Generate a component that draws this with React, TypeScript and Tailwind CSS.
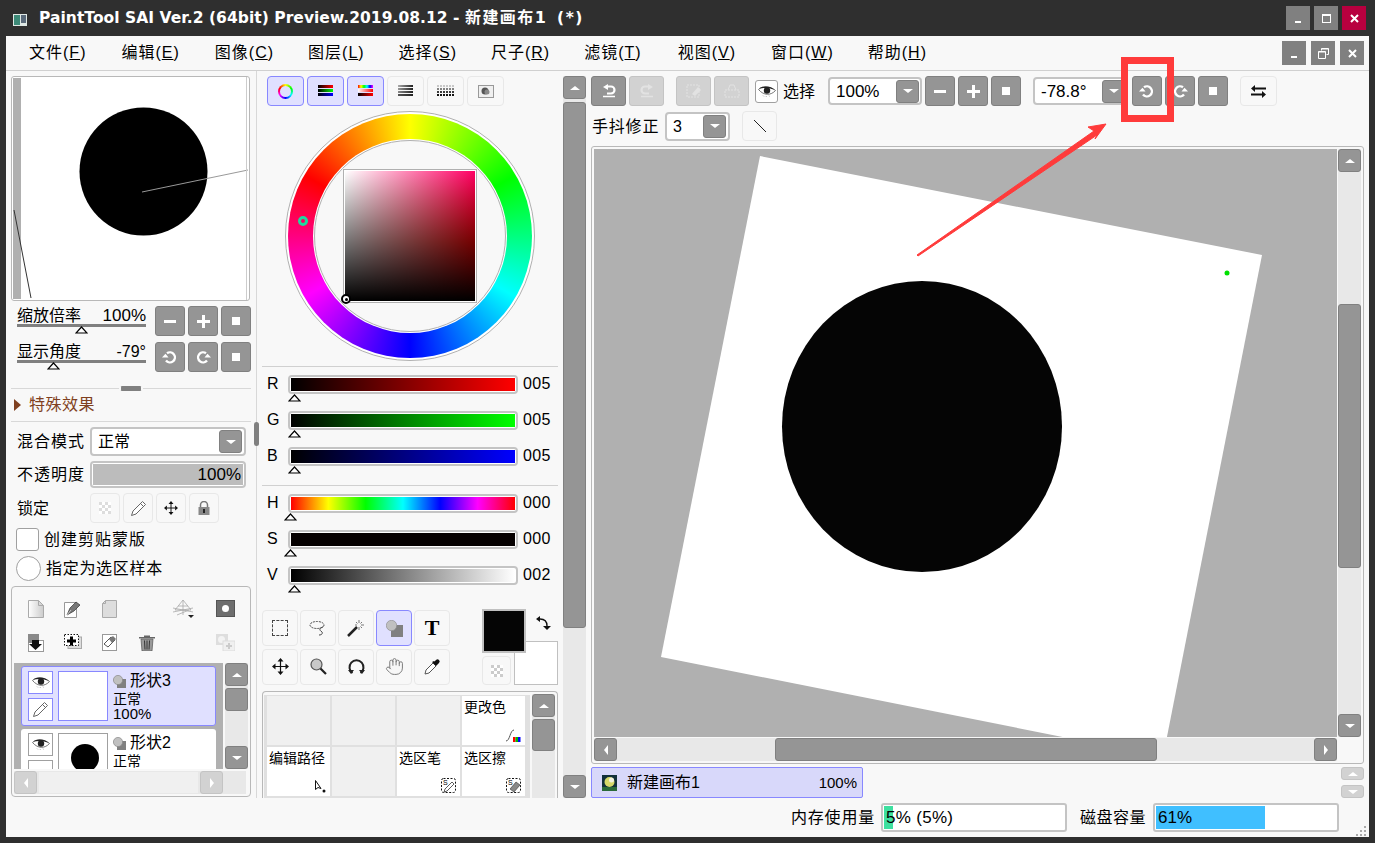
import React from "react";
import { Hand } from "lucide-react";

type P = { className?: string; children?: React.ReactNode };

const Gbtn = ({ className = "w-[30px] h-[30px]", children }: P) => (
  <div className={`flex shrink-0 items-center justify-center rounded-[3px] border border-[#808080] bg-[#959595] ${className}`}>{children}</div>
);
const Ghost = ({ className = "w-[30px] h-[30px]", children }: P) => (
  <div className={`flex shrink-0 items-center justify-center rounded-[4px] border border-[#e8e8e8] bg-[#f8f8f8] ${className}`}>{children}</div>
);
const Active = ({ className = "w-[37px] h-[30px]", children }: P) => (
  <div className={`flex shrink-0 items-center justify-center rounded-[4px] border border-[#8888ff] bg-[#e0e0ff] ${className}`}>{children}</div>
);
const Disabled = ({ className = "w-[35px] h-[30px]", children }: P) => (
  <div className={`flex shrink-0 items-center justify-center rounded-[3px] border border-[#c4c4c4] bg-[#d2d2d2] ${className}`}>{children}</div>
);

const Minus = () => <div className="h-[3px] w-[12px] bg-white" />;
const Plus = () => (
  <svg width="13" height="13" viewBox="0 0 13 13"><path d="M5 0h3v5h5v3H8v5H5V8H0V5h5z" fill="#fff" /></svg>
);
const Sq = () => <div className="h-[8px] w-[8px] bg-white" />;
const Ccw = ({ color = "#fff" }: { color?: string }) => (
  <svg width="16" height="15" viewBox="0 0 16 15" fill="none">
    <path d="M5 3.300A5 5 0 1 1 4 10.500" stroke={color} strokeWidth="2.400" />
    <path d="M0 7.500h6.500L3.500 3.800z" fill={color} />
  </svg>
);
const Cw = ({ color = "#fff" }: { color?: string }) => (
  <svg width="16" height="15" viewBox="0 0 16 15" fill="none">
    <path d="M11 3.300A5 5 0 1 0 12 10.500" stroke={color} strokeWidth="2.400" />
    <path d="M16 7.500H9.500l3-3.700z" fill={color} />
  </svg>
);
const DownTri = () => <div className="h-0 w-0 border-x-[5px] border-t-[4px] border-x-transparent border-t-white" />;
const Drop = ({ className }: P) => <Gbtn className={className}><DownTri /></Gbtn>;
const UpTri = () => <div className="h-0 w-0 border-x-[5px] border-b-[4px] border-x-transparent border-b-white" />;
const LeftTri = () => <div className="h-0 w-0 border-y-[5px] border-r-[4px] border-y-transparent border-r-white" />;
const RightTri = () => <div className="h-0 w-0 border-y-[5px] border-l-[4px] border-y-transparent border-l-white" />;
const Thumb = () => (
  <svg width="13" height="8" viewBox="0 0 13 8" className="block"><path d="M6.500 1 12 7H1z" fill="#fff" stroke="#000" strokeWidth="1.200" /></svg>
);
const Eye = () => (
  <svg width="18" height="11" viewBox="0 0 18 11">
    <path d="M0.500 3.500C4 0 12 -0.500 17.500 4.500 13 9.500 6 10 0.500 3.500z" fill="#fff" stroke="#555" strokeWidth=".8" />
    <circle cx="9" cy="4.500" r="3.200" fill="#222" />
    <path d="M1 2.500C5-0.500 12-0.500 17 4 12 1.500 6 1.500 1 2.500z" fill="#222" />
    <path d="M5 9.500l1 1M8 10l.5 1M11 9.500l.5 1" stroke="#999" strokeWidth=".7" />
  </svg>
);
const Pencil = ({ c = "#555" }: { c?: string }) => (
  <svg width="17" height="17" viewBox="0 0 17 17" fill="#fff" stroke={c} strokeWidth="1">
    <path d="M12.500 1.500l3 3-9.500 9.500-4.500 1.500 1.500-4.500z" />
    <path d="M10.500 3.500l3 3" />
  </svg>
);
const LayerIcon = () => (
  <svg width="13" height="13" viewBox="0 0 13 13" className="shrink-0">
    <rect x="4" y="4" width="9" height="9" fill="#808080" />
    <circle cx="5" cy="5" r="4.600" fill="#c0c0c0" stroke="#888" strokeWidth=".7" />
  </svg>
);
const Move4 = ({ s = 17 }: { s?: number }) => (
  <svg width={s} height={s} viewBox="0 0 17 17">
    <path d="M8.500 3v11M3 8.500h11" stroke="#111" strokeWidth="1.200" />
    <path d="M8.500 0l3 3.500h-6zM8.500 17l3-3.500h-6zM0 8.500l3.500-3v6zM17 8.500l-3.500-3v6z" fill="#111" />
  </svg>
);

const Doc = () => (
  <svg width="16" height="18" viewBox="0 0 16 18">
    <defs><linearGradient id="dg" x1="0" x2="1"><stop offset="0" stopColor="#fff" /><stop offset="1" stopColor="#ccc" /></linearGradient></defs>
    <path d="M.5.500h10l5 5v12H.5z" fill="url(#dg)" stroke="#aaa" />
    <path d="M10.500.5v5h5" fill="none" stroke="#aaa" />
  </svg>
);
const PenDoc = () => (
  <svg width="18" height="18" viewBox="0 0 18 18">
    <path d="M.5 2.500h12v15H.5z" fill="#fff" stroke="#999" />
    <path d="M3 15l3-7 6-6 4 3-6 6z" fill="#777" stroke="#333" strokeWidth=".7" />
    <path d="M3 15l4-5" stroke="#fff" strokeWidth=".6" />
  </svg>
);
const FolderDoc = () => (
  <svg width="15" height="18" viewBox="0 0 15 18"><path d="M3.500.5h11v17H.5V3.500z" fill="#ddd" stroke="#aaa" /><path d="M3.500.5v3h-3" fill="none" stroke="#aaa" /></svg>
);
const Persp = () => (
  <svg width="21" height="19" viewBox="0 0 21 19" fill="none" stroke="#aaa" strokeWidth=".8">
    <path d="M10 1L2 11h16zM10 1v15M5 7h10M0 9l20 4M0 13l20-4M4 16l12-5" />
    <path d="M15 16h6l-3 3z" fill="#222" stroke="none" />
  </svg>
);
const Mask = () => (
  <div className="flex h-[15px] w-[17px] items-center justify-center bg-[#6e6e6e] outline outline-1 outline-[#555]"><div className="h-[7px] w-[7px] rounded-full bg-white" /></div>
);
const MergeDown = () => (
  <svg width="16" height="18" viewBox="0 0 16 18">
    <rect x=".5" y="6.500" width="15" height="11" fill="#fff" stroke="#999" />
    <rect x="0" y="0" width="11" height="9" fill="#8a8a8a" />
    <path d="M4 6h7v4h3l-6.500 6L1 10h3z" fill="#111" />
  </svg>
);
const AddSel = () => (
  <svg width="18" height="15" viewBox="0 0 18 15">
    <rect x="4" y="3" width="13.500" height="11.500" fill="#ddd" stroke="#aaa" />
    <rect x=".5" y=".5" width="14" height="11" fill="#fff" stroke="#111" strokeDasharray="1.500 1.500" />
    <path d="M6 2.500h3v3h3v3H9v3H6v-3H3v-3h3z" fill="#000" />
  </svg>
);
const EraseDoc = () => (
  <svg width="15" height="17" viewBox="0 0 15 17">
    <rect x=".5" y=".5" width="14" height="16" fill="#fff" stroke="#999" />
    <path d="M2 10l7-7 4 3-7 7z" fill="#fff" stroke="#555" />
    <path d="M7 5l4-3 3 3-4 4z" fill="#777" />
  </svg>
);
const Trash = () => (
  <svg width="16" height="17" viewBox="0 0 16 17">
    <path d="M0 3h16v1.500H0zM5 1.500h6V3H5z" fill="#666" />
    <path d="M2 5h12l-1 12H3z" fill="#9a9a9a" stroke="#555" strokeWidth=".7" />
    <path d="M5.500 6.500l.5 9M8 6.500v9M10.500 6.500l-.5 9" stroke="#333" />
  </svg>
);
const CopyDis = () => (
  <svg width="19" height="17" viewBox="0 0 19 17">
    <rect x="0" y="0" width="12" height="11" fill="#dedede" /><circle cx="5.500" cy="5.500" r="3.500" fill="#f3f3f3" />
    <rect x="7" y="7" width="12" height="10" fill="#f0f0f0" stroke="#ddd" />
    <path d="M12 9h2v2h2v2h-2v2h-2v-2h-2v-2h2z" fill="#ccc" />
  </svg>
);
const Checker = ({ c = "#ccc" }: { c?: string }) => (
  <svg width="12" height="12" viewBox="0 0 4 4" shapeRendering="crispEdges"><rect width="4" height="4" fill="#fff" /><path d="M0 0h1v1H0zM2 0h1v1H2zM1 1h1v1H1zM3 1h1v1H3zM0 2h1v1H0zM2 2h1v1H2zM1 3h1v1H1zM3 3h1v1H3z" fill={c} /></svg>
);
const Lock = () => (
  <svg width="12" height="14" viewBox="0 0 12 14"><path d="M2.500 7V4a3.500 3.500 0 0 1 7 0v3" fill="none" stroke="#777" strokeWidth="1.500" /><rect x="0.500" y="6" width="11" height="8" fill="#888" /><rect x="5" y="8" width="2" height="4" fill="#222" /></svg>
);

const Sel = ({ className, text, dropClass = "w-[23px] h-[23px]", size = "text-[16px]" }: P & { text: string; dropClass?: string; size?: string }) => (
  <div className={`flex shrink-0 items-center justify-between rounded-[4px] border-2 border-[#c4c4c4] bg-white pr-[1px] ${className}`}>
    <span className={`pl-[6px] pt-[1px] leading-none ${size}`}>{text}</span>
    <Drop className={dropClass} />
  </div>
);

const NavSlider = ({ label, value, pos, vclass }: { label: string; value: string; pos: string; vclass: string }) => (
  <div className="w-[129px]">
    <div className="flex h-[18px] items-center justify-between pt-[1px] text-[16px] leading-none"><span>{label}</span><span className={vclass}>{value}</span></div>
    <div className="h-[3px] bg-[#808080]" />
    <div className={`-mt-[1px] ${pos}`}><Thumb /></div>
  </div>
);

const Menu = ({ t, k, className }: { t: string; k: string; className: string }) => (
  <span className={`shrink-0 text-[16px] tracking-[1px] ${className}`}>{t}(<u>{k}</u>)</span>
);

const ColorRow = ({ l, v, g, pos }: { l: string; v: string; g: string; pos: string }) => (
  <div className="h-[36px]">
    <div className="flex h-[19px] items-center">
      <span className="w-[21px] pb-[2px] text-[16px] leading-none">{l}</span>
      <div className="h-[19px] w-[230px] rounded-[4px] border-2 border-[#c4c4c4] bg-white p-[1px]"><div className={`h-full w-full ${g}`} /></div>
      <span className="pb-[2px] pl-[5px] text-[16px] leading-none tracking-[0.3px]">{v}</span>
    </div>
    <div className={pos}><Thumb /></div>
  </div>
);

const Cell = ({ t, icon }: { t?: string; icon?: React.ReactNode }) => (
  <div className={`relative h-[49px] w-[63px] ${t ? "bg-white" : "bg-[#f0f0f0]"}`}>
    {t && <div className="pl-[2px] pt-[2px] text-[14px] leading-[18px] whitespace-nowrap">{t}</div>}
    {icon && <div className="absolute bottom-[3px] right-[4px]">{icon}</div>}
  </div>
);

const SPen = ({ erase }: { erase?: boolean }) => (
  <svg width="15" height="15" viewBox="0 0 15 15">
    <rect x=".5" y=".5" width="14" height="14" rx="2" fill="#fff" stroke="#111" strokeDasharray="2 1.500" />
    <text x="2" y="7" fontSize="7" fontFamily="Liberation Sans">S</text>
    {erase ? <path d="M4 11l6-7 4 3-6 7z" fill="#888" stroke="#333" strokeWidth=".6" /> : <path d="M3 14l1-3 7-7 2 2-7 7z" fill="#fff" stroke="#333" strokeWidth=".8" />}
  </svg>
);

export default function App() {
  return (
    <div className="relative h-[843px] w-[1375px] overflow-hidden bg-[#2f2f2f] text-black [font-family:'Liberation_Sans','Noto_Sans_CJK_SC',sans-serif]">
      {/* title bar */}
      <div className="flex h-[36px] items-start">
        <div className="ml-[13px] mt-[14px] flex h-[12px] w-[14px] bg-[#dfe8e4]">
          <div className="m-[1px] w-[6px] bg-[#3d8a78]" /><div className="mt-[1px] h-[8px] w-[5px] bg-[#5a6a7a]" />
        </div>
        <div className="ml-[12px] mt-[7px] text-[15.5px] font-bold leading-[22px] tracking-[0.04px] text-white whitespace-nowrap [font-family:'DejaVu_Sans','Noto_Sans_CJK_SC',sans-serif]">PaintTool SAI Ver.2 (64bit) Preview.2019.08.12 - <span className="text-[16px] tracking-[1.4px]">新建画布1</span><span className="ml-[3px] tracking-[1.5px]"> (*)</span></div>
        <div className="ml-auto mr-[9px] mt-[6px] flex gap-[4px]">
          <div className="flex h-[24px] w-[24px] items-end justify-center bg-[#808080] pb-[7px]"><div className="h-[2px] w-[6px] bg-white" /></div>
          <div className="flex h-[24px] w-[24px] items-center justify-center bg-[#808080]"><div className="h-[9px] w-[9px] border border-t-2 border-white" /></div>
          <div className="flex h-[24px] w-[24px] items-center justify-center bg-[#b8003f]">
            <svg width="9" height="9" viewBox="0 0 9 9"><path d="M1 1l7 7M8 1L1 8" stroke="#fff" strokeWidth="2" /></svg>
          </div>
        </div>
      </div>

      {/* window */}
      <div className="relative ml-[6px] h-[801px] w-[1363px] bg-[#f8f8f8]">
        <div className="flex h-[35px] items-center border-b border-[#d0d0d0]">
          <Menu className="ml-[23px]" t="文件" k="F" />
          <Menu className="ml-[35px]" t="编辑" k="E" />
          <Menu className="ml-[35px]" t="图像" k="C" />
          <Menu className="ml-[34px]" t="图层" k="L" />
          <Menu className="ml-[34px]" t="选择" k="S" />
          <Menu className="ml-[34px]" t="尺子" k="R" />
          <Menu className="ml-[34px]" t="滤镜" k="T" />
          <Menu className="ml-[36px]" t="视图" k="V" />
          <Menu className="ml-[35px]" t="窗口" k="W" />
          <Menu className="ml-[34px]" t="帮助" k="H" />
          <div className="ml-auto mr-[5px] flex gap-[5px]">
            <div className="flex h-[24px] w-[24px] items-end justify-center bg-[#808080] pb-[7px]"><div className="h-[2px] w-[6px] bg-white" /></div>
            <div className="flex h-[24px] w-[24px] items-center justify-center bg-[#808080]">
              <svg width="11" height="11" viewBox="0 0 11 11" fill="none" stroke="#fff"><path d="M3.500 2.500V.5h7v6h-2" /><path d="M.5 3.500h7v7h-7z" /><path d="M.5 4h7M3.500 1h7" /></svg>
            </div>
            <div className="flex h-[24px] w-[24px] items-center justify-center bg-[#808080]">
              <svg width="9" height="9" viewBox="0 0 9 9"><path d="M1 1l7 7M8 1L1 8" stroke="#fff" strokeWidth="2" /></svg>
            </div>
          </div>
        </div>

        <div className="flex h-[766px]">
          {/* left column */}
          <div className="relative h-[727px] w-[251px] shrink-0 border-r border-[#d8d8d8] pl-[5px]">
            <div className="mt-[5px] h-[225px] w-[239px] overflow-hidden rounded-[3px] border border-[#b8b8b8] bg-white">
              <svg width="237" height="223" viewBox="0 0 237 223" className="block">
                <rect x="1" y="1" width="8" height="221" fill="#b0b0b0" />
                <circle cx="131.500" cy="94.500" r="64" fill="#000" />
                <path d="M130 115L236 93" stroke="#999" fill="none" />
                <path d="M2 133L19 221" stroke="#333" fill="none" />
                <path d="M234.500 0V223" stroke="#ccc" fill="none" />
              </svg>
            </div>
            <div className="mt-[5px] flex h-[30px] pl-[6px]">
              <NavSlider label="缩放倍率" value="100%" pos="ml-[58px]" vclass="text-[17px]" />
              <div className="ml-[9px] flex gap-[3px]"><Gbtn><Minus /></Gbtn><Gbtn><Plus /></Gbtn><Gbtn><Sq /></Gbtn></div>
            </div>
            <div className="mt-[6px] flex h-[30px] pl-[6px]">
              <NavSlider label="显示角度" value="-79°" pos="ml-[30px]" vclass="text-[16px]" />
              <div className="ml-[9px] flex gap-[3px]"><Gbtn><Ccw /></Gbtn><Gbtn><Cw /></Gbtn><Gbtn><Sq /></Gbtn></div>
            </div>
            <div className="relative mt-[16px] h-[1px] w-[240px] bg-[#d8d8d8]">
              <div className="absolute left-[108px] top-[-2px] h-[5px] w-[24px] rounded-full border-x-2 border-[#f8f8f8] bg-[#808080]" />
            </div>
            <div className="flex h-[33px] w-[240px] items-center border-b border-[#d8d8d8] pl-[3px] text-[16px] text-[#7f4020]">
              <div className="h-0 w-0 border-y-[6px] border-l-[7px] border-y-transparent border-l-[#7f4020]" />
              <span className="ml-[8px] tracking-[0.5px]">特殊效果</span>
            </div>
            <div className="mt-[5px] flex h-[29px] items-center pl-[6px]">
              <span className="w-[73px] text-[16px] leading-none tracking-[1px]">混合模式</span>
              <Sel className="h-[29px] w-[156px]" text="正常" dropClass="w-[23px] h-[23px] mr-[1px]" />
            </div>
            <div className="mt-[5px] flex h-[27px] items-center pl-[6px]">
              <span className="w-[73px] text-[16px] leading-none tracking-[1px]">不透明度</span>
              <div className="h-[27px] w-[156px] rounded-[4px] border-2 border-[#c4c4c4] bg-white p-[1px]">
                <div className="flex h-full items-center justify-end bg-[#bcbcbc] pr-[2px] pt-[1px] text-[17px]">100%</div>
              </div>
            </div>
            <div className="mt-[5px] flex h-[30px] items-center pl-[6px]">
              <span className="w-[73px] pt-[1px] text-[16px] leading-none">锁定</span>
              <div className="flex gap-[3px]">
                <Ghost><Checker c="#ddd" /></Ghost>
                <Ghost><Pencil c="#666" /></Ghost>
                <Ghost><Move4 s={14} /></Ghost>
                <Ghost><Lock /></Ghost>
              </div>
            </div>
            <div className="mt-[5px] flex h-[23px] items-center pl-[5px]">
              <div className="h-[23px] w-[23px] rounded-[3px] border border-[#a0a0a0] bg-white" />
              <span className="ml-[5px] text-[16px] leading-none tracking-[1px]">创建剪贴蒙版</span>
            </div>
            <div className="mt-[5px] flex h-[25px] items-center pl-[5px]">
              <div className="h-[25px] w-[25px] rounded-full border border-[#a0a0a0] bg-white" />
              <span className="ml-[5px] text-[16px] leading-none tracking-[0.7px]">指定为选区样本</span>
            </div>
            <div className="mt-[5px] h-[211px] w-[240px] rounded-[4px] border border-[#b8b8b8] px-[2px]">
              <div className="flex h-[42px] items-center pl-[3px] pt-[1px]">
                <div className="flex w-[37px] justify-center"><Doc /></div>
                <div className="flex w-[37px] justify-center"><PenDoc /></div>
                <div className="flex w-[37px] justify-center"><FolderDoc /></div>
                <div className="ml-[37px] flex w-[37px] justify-center"><Persp /></div>
                <div className="ml-[5px] flex w-[37px] justify-center"><Mask /></div>
              </div>
              <div className="flex h-[34px] items-start pl-[3px] pt-[5px]">
                <div className="flex w-[37px] justify-center"><MergeDown /></div>
                <div className="flex w-[37px] justify-center"><AddSel /></div>
                <div className="flex w-[37px] justify-center"><EraseDoc /></div>
                <div className="flex w-[37px] justify-center"><Trash /></div>
                <div className="ml-[42px] flex w-[37px] justify-center"><CopyDis /></div>
              </div>
              <div className="flex gap-[2px]">
                <div className="h-[106px] w-[209px] overflow-hidden bg-[#b0b0b0] px-[7px] pt-[3px]">
                  <div className="flex h-[60px] w-[195px] items-start rounded-[3px] border border-[#8888ff] bg-[#e0e0ff] pl-[6px] pt-[4px]">
                    <div className="flex flex-col gap-[4px]">
                      <div className="flex h-[23px] w-[25px] items-center justify-center border border-[#8888ff] bg-white"><Eye /></div>
                      <div className="flex h-[23px] w-[25px] items-center justify-center border border-[#8888ff] bg-white"><Pencil c="#666" /></div>
                    </div>
                    <div className="ml-[5px] h-[50px] w-[50px] border border-[#8888ff] bg-white" />
                    <div className="ml-[5px] pt-[1px]">
                      <div className="flex h-[18px] items-center gap-[4px] text-[16px] leading-none"><LayerIcon /><span>形状3</span></div>
                      <div className="text-[14px] leading-[16px] mt-[1px]">正常</div>
                      <div className="text-[15px] leading-[14px]">100%</div>
                    </div>
                  </div>
                  <div className="mt-[3px] flex h-[60px] w-[195px] items-start rounded-[3px] bg-white pl-[7px] pt-[4px]">
                    <div className="flex flex-col gap-[4px]">
                      <div className="flex h-[23px] w-[25px] items-center justify-center border border-[#a0a0a0] bg-white"><Eye /></div>
                      <div className="h-[23px] w-[25px] border border-[#a0a0a0] bg-white" />
                    </div>
                    <div className="ml-[5px] flex h-[50px] w-[50px] items-center justify-center border border-[#a0a0a0] bg-white pl-[4px]">
                      <div className="h-[28px] w-[28px] rounded-full bg-black" />
                    </div>
                    <div className="ml-[5px] pt-[1px]">
                      <div className="flex h-[18px] items-center gap-[4px] text-[16px] leading-none"><LayerIcon /><span>形状2</span></div>
                      <div className="text-[14px] leading-[16px] mt-[1px]">正常</div>
                    </div>
                  </div>
                </div>
                <div className="flex h-[106px] w-[23px] flex-col bg-[#e8e8e8]">
                  <Gbtn className="h-[23px] w-[23px]"><UpTri /></Gbtn>
                  <Gbtn className="mt-[2px] h-[23px] w-[23px]" />
                  <Gbtn className="mt-auto h-[23px] w-[23px]"><DownTri /></Gbtn>
                </div>
              </div>
              <div className="mt-[2px] flex h-[23px] w-[232px] items-center bg-[#e8e8e8]">
                <Disabled className="h-[23px] w-[23px]"><LeftTri /></Disabled>
                <div className="mx-[2px] h-[21px] w-[159px] bg-[#f0f0f0]" />
                <Disabled className="h-[23px] w-[23px]"><RightTri /></Disabled>
              </div>
            </div>
            <div className="absolute left-[248px] top-[351px] h-[24px] w-[5px] rounded-full bg-[#808080]" />
          </div>

          {/* middle column */}
          <div className="h-[727px] w-[306px] shrink-0 overflow-hidden">
            <div className="ml-[10px] mt-[5px] flex h-[30px] gap-[3px]">
              <Active>
                <div className="h-[15px] w-[15px] rounded-full bg-[conic-gradient(#ff0,#0f0,#0ff,#00f,#f0f,#f00,#ff0)] p-[2px]"><div className="h-full w-full rounded-full bg-[#e0e0ff]" /></div>
              </Active>
              <Active>
                <div className="flex h-[13px] w-[15px] flex-col gap-[1px]">
                  <div className="h-[3px] bg-[linear-gradient(to_right,#000,#f00)]" /><div className="h-[3px] bg-[linear-gradient(to_right,#000,#0f0)]" /><div className="h-[3px] bg-[linear-gradient(to_right,#000,#00f)]" />
                </div>
              </Active>
              <Active>
                <div className="flex h-[13px] w-[15px] flex-col gap-[1px]">
                  <div className="h-[3px] bg-[linear-gradient(to_right,#f00,#ff0,#0f0,#0ff,#00f,#f0f)]" /><div className="h-[3px] bg-[linear-gradient(to_right,#fff,#f00)]" /><div className="h-[3px] bg-[linear-gradient(to_right,#000,#f00)]" />
                </div>
              </Active>
              <Ghost className="h-[30px] w-[37px]">
                <div className="flex h-[12px] w-[15px] flex-col gap-[1px]">
                  <div className="h-[2px] bg-[linear-gradient(to_right,#aaa,#222)]" /><div className="h-[2px] bg-[linear-gradient(to_right,#999,#222)]" /><div className="h-[2px] bg-[linear-gradient(to_right,#888,#222)]" /><div className="h-[2px] bg-[linear-gradient(to_right,#555,#222)]" />
                </div>
              </Ghost>
              <Ghost className="h-[30px] w-[37px]">
                <svg width="18" height="12" viewBox="0 0 18 12">
                  {[0, 1, 2, 3].map((r) => [0, 1, 2, 3, 4, 5].map((c) => (
                    <rect key={`${r}-${c}`} x={c * 3} y={r * 3} width="2" height="2" fill={`rgb(${Math.max(20, 200 - r * 70)},${Math.max(20, 200 - r * 70)},${Math.max(20, 200 - r * 70)})`} />
                  )))}
                </svg>
              </Ghost>
              <Ghost className="h-[30px] w-[37px]">
                <svg width="16" height="13" viewBox="0 0 16 13"><rect x=".5" y=".5" width="15" height="12" fill="#f0f0f0" stroke="#999" /><circle cx="7" cy="6" r="3.500" fill="#555" /><circle cx="9" cy="7" r="2.500" fill="#888" /></svg>
              </Ghost>
            </div>
            {/* wheel */}
            <div className="ml-[28px] mt-[5px] h-[250px] w-[250px] rounded-full border border-[#b0b0b0] bg-white p-[2px]">
              <div className="relative h-full w-full rounded-full bg-[conic-gradient(#ff0,#0f0,#0ff,#00f,#f0f,#f00,#ff0)] p-[25px]">
                <div className="h-full w-full rounded-full bg-white p-[1px]">
                  <div className="flex h-full w-full items-center justify-center rounded-full border border-[#b0b0b0] bg-[#f8f8f8]">
                    <div className="relative shrink-0 border border-[#b0b0b0] bg-white p-[1px]">
                      <div className="h-[130px] w-[130px] bg-[linear-gradient(to_top,#000,transparent),linear-gradient(to_right,#fff,transparent),linear-gradient(to_bottom,#ff0066,#ff0000_55%,#ff0000)]" />
                      <div className="absolute bottom-[-2px] left-[-3px] flex h-[10px] w-[10px] items-center justify-center rounded-full border-2 border-black bg-white"><div className="h-[3px] w-[3px] rounded-full bg-black" /></div>
                    </div>
                  </div>
                </div>
                <div className="absolute left-[10px] top-[102px] h-[10px] w-[10px] rounded-full border-[3px] border-[#1fd8a0]" />
              </div>
            </div>
            <div className="ml-[5px] mt-[5px] h-[1px] w-[296px] bg-[#d0d0d0]" />
            <div className="ml-[10px] mt-[8px]">
              <ColorRow l="R" v="005" g="bg-[linear-gradient(to_right,#000,#f00)]" pos="ml-[21px]" />
              <ColorRow l="G" v="005" g="bg-[linear-gradient(to_right,#000,#0f0)]" pos="ml-[21px]" />
              <ColorRow l="B" v="005" g="bg-[linear-gradient(to_right,#000,#00f)]" pos="ml-[21px]" />
            </div>
            <div className="ml-[5px] mt-[2px] h-[1px] w-[296px] bg-[#d0d0d0]" />
            <div className="ml-[10px] mt-[8px]">
              <ColorRow l="H" v="000" g="bg-[linear-gradient(to_right,#f00,#ff0,#0f0,#0ff,#00f,#f0f,#f00)]" pos="ml-[17px]" />
              <ColorRow l="S" v="000" g="bg-[#050000]" pos="ml-[17px]" />
              <ColorRow l="V" v="002" g="bg-[linear-gradient(to_right,#000,#fff)]" pos="ml-[21px]" />
            </div>
            {/* tools */}
            <div className="ml-[5px] mt-[8px] flex h-[75px]">
              <div className="grid w-[188px] grid-cols-[36px_36px_36px_36px_36px] gap-[2px]">
                <Ghost className="h-[36px] w-[36px]"><div className="h-[16px] w-[16px] border border-dashed border-[#444]" /></Ghost>
                <Ghost className="h-[36px] w-[36px]">
                  <svg width="18" height="16" viewBox="0 0 18 16" fill="none" stroke="#444"><ellipse cx="8" cy="5" rx="7" ry="3.500" strokeDasharray="2 1" /><path d="M14 7c-4 1-4 3-1 5 1 1 0 3-3 3" /></svg>
                </Ghost>
                <Ghost className="h-[36px] w-[36px]">
                  <svg width="18" height="18" viewBox="0 0 18 18"><path d="M1 17l9-9" stroke="#222" strokeWidth="2.500" /><path d="M12 1v3M12 8v3M8 6h2M14 6h3M9 3l1.500 1.500M15 3l-1.500 1.500M15 9l-1.500-1.500" stroke="#777" /></svg>
                </Ghost>
                <Active className="h-[36px] w-[36px]">
                  <svg width="17" height="17" viewBox="0 0 17 17"><rect x="5" y="5" width="12" height="12" fill="#808080" /><circle cx="5.500" cy="5.500" r="5.200" fill="#c0c0c0" stroke="#888" strokeWidth=".6" /></svg>
                </Active>
                <Ghost className="h-[36px] w-[36px]"><span className="text-[22px] font-bold leading-none [font-family:'Liberation_Serif',serif]">T</span></Ghost>
                <Ghost className="h-[36px] w-[36px]"><Move4 /></Ghost>
                <Ghost className="h-[36px] w-[36px]">
                  <svg width="17" height="17" viewBox="0 0 17 17"><circle cx="6.500" cy="6.500" r="5.500" fill="#c8c8c8" stroke="#555" strokeWidth="1.200" /><path d="M10.500 10.500l5.500 5.500" stroke="#222" strokeWidth="2.200" /></svg>
                </Ghost>
                <Ghost className="h-[36px] w-[36px]">
                  <svg width="17" height="15" viewBox="0 0 17 15" fill="none"><path d="M4.500 14A7 7 0 1 1 12.500 14" stroke="#222" strokeWidth="2" /><path d="M0 11h6l-3 4zM11 11h6l-3 4z" fill="#222" /></svg>
                </Ghost>
                <Ghost className="h-[36px] w-[36px]"><Hand size={19} strokeWidth={1.2} color="#777" /></Ghost>
                <Ghost className="h-[36px] w-[36px]">
                  <svg width="17" height="17" viewBox="0 0 17 17"><path d="M1 16l1-4 7-7 3 3-7 7z" fill="#fff" stroke="#555" /><path d="M8 4l4 4 1.500-1.500L15 5a2 2 0 0 0-3-3l-1.500 1.500L10 3z" fill="#111" /></svg>
                </Ghost>
              </div>
              <div className="relative ml-[32px] w-[76px]">
                <div className="absolute left-[32px] top-[31px] h-[44px] w-[44px] border border-[#c0c0c0] bg-white" />
                <div className="absolute left-0 top-[-1px] h-[44px] w-[44px] border-2 border-[#c0c0c0] bg-[#050505]" />
                <Ghost className="absolute left-0 top-[46px] h-[29px] w-[29px]"><Checker /></Ghost>
                <svg width="15" height="15" viewBox="0 0 15 15" className="absolute left-[54px] top-[6px]" fill="none"><path d="M4 3c5 0 7 2 7 7" stroke="#111" strokeWidth="1.400" /><path d="M0 3l4-3v6zM7 10h8l-4 4z" fill="#111" /></svg>
              </div>
            </div>
            {/* brushes */}
            <div className="ml-[5px] mt-[6px] flex h-[108px] w-[296px] overflow-hidden rounded-t-[4px] border-x border-t border-[#b8b8b8]">
              <div className="ml-[1px] mt-[3px] h-[120px] w-[266px] shrink-0 bg-[#e0e0e0] p-[1px] pl-[3px]">
                <div className="grid grid-cols-[63px_63px_63px_63px] gap-[2px]">
                  <Cell /><Cell /><Cell />
                  <Cell t="更改色" icon={<svg width="15" height="13" viewBox="0 0 15 13"><path d="M0 12C4 12 4 1 8 1" fill="none" stroke="#555" /><rect x="7" y="8" width="2.500" height="5" fill="#f00" /><rect x="9.500" y="8" width="2.500" height="5" fill="#0b0" /><rect x="12" y="8" width="2.500" height="5" fill="#00f" /></svg>} />
                  <Cell t="编辑路径" icon={<svg width="11" height="13" viewBox="0 0 11 13"><path d="M.5.5v9l2.500-2 3 1z" fill="#fff" stroke="#111" /><circle cx="9" cy="11" r="1.500" fill="#111" /></svg>} />
                  <Cell />
                  <Cell t="选区笔" icon={<SPen />} />
                  <Cell t="选区擦" icon={<SPen erase />} />
                  <Cell /><Cell /><Cell /><Cell />
                </div>
              </div>
              <div className="ml-[2px] mt-[2px] flex w-[23px] shrink-0 flex-col bg-[#e8e8e8]">
                <Gbtn className="h-[23px] w-[23px]"><UpTri /></Gbtn>
                <Gbtn className="mt-[2px] h-[32px] w-[23px]" />
              </div>
            </div>
          </div>

          {/* long scrollbar */}
          <div className="mt-[5px] flex h-[722px] w-[23px] shrink-0 flex-col bg-[#e8e8e8]">
            <Gbtn className="h-[23px] w-[23px]"><UpTri /></Gbtn>
            <Gbtn className="mt-[3px] h-[526px] w-[23px]" />
            <Gbtn className="mt-auto h-[23px] w-[23px]"><DownTri /></Gbtn>
          </div>

          {/* right */}
          <div className="w-[783px] shrink-0 pl-[5px]">
            <div className="mt-[5px] flex h-[30px] items-center">
              <Gbtn className="h-[30px] w-[35px]">
                <svg width="16" height="14" viewBox="0 0 16 14" fill="none"><path d="M5 2.500h5a3.500 3.500 0 0 1 0 7H6" stroke="#fff" strokeWidth="2.200" /><path d="M7 0v6L2 3z" fill="#fff" /><path d="M2 12.500h12" stroke="#fff" strokeWidth="1.500" /></svg>
              </Gbtn>
              <Disabled className="ml-[3px] h-[30px] w-[35px]">
                <svg width="16" height="14" viewBox="0 0 16 14" fill="none"><path d="M11 2.500H6a3.500 3.500 0 0 0 0 7h4" stroke="#e2e2e2" strokeWidth="2.200" /><path d="M9 0v6l5-3z" fill="#e2e2e2" /><path d="M2 12.500h12" stroke="#e2e2e2" strokeWidth="1.500" /></svg>
              </Disabled>
              <Disabled className="ml-[12px] h-[30px] w-[35px]">
                <svg width="16" height="16" viewBox="0 0 16 16" fill="none"><rect x="1" y="2" width="12" height="12" stroke="#e2e2e2" strokeDasharray="2 1" /><path d="M6 11l6-7 3 3-6 6z" fill="#e2e2e2" /></svg>
              </Disabled>
              <Disabled className="ml-[3px] h-[30px] w-[35px]">
                <svg width="16" height="16" viewBox="0 0 16 16" fill="none"><rect x="1" y="7" width="14" height="7" stroke="#e2e2e2" strokeDasharray="2 1" /><path d="M4 7l2-5h4l2 5" stroke="#e2e2e2" /></svg>
              </Disabled>
              <div className="ml-[6px] flex h-[23px] w-[23px] items-center justify-center rounded-[3px] border border-[#a0a0a0] bg-white"><Eye /></div>
              <span className="ml-[5px] w-[45px] pt-[1px] text-[16px] leading-none">选择</span>
              <Sel className="h-[28px] w-[94px]" text="100%" size="text-[17px]" />
              <div className="ml-[3px] flex gap-[3px]"><Gbtn><Minus /></Gbtn><Gbtn><Plus /></Gbtn><Gbtn><Sq /></Gbtn></div>
              <Sel className="ml-[12px] h-[28px] w-[95px]" text="-78.8°" size="text-[17px]" />
              <div className="ml-[4px] flex gap-[3px]"><Gbtn><Ccw /></Gbtn><Gbtn><Cw /></Gbtn><Gbtn><Sq /></Gbtn></div>
              <Ghost className="ml-[12px] h-[30px] w-[37px]">
                <svg width="15" height="13" viewBox="0 0 15 13"><path d="M4 0v2.500h11v2H4V7L0 3.500zM11 6v2.500H0v2h11V13l4-3.500z" fill="#111" /></svg>
              </Ghost>
            </div>
            <div className="mt-[5px] flex h-[30px] items-center">
              <span className="w-[74px] pl-[1px] pt-[1px] text-[16px] leading-none tracking-[0.8px]">手抖修正</span>
              <Sel className="h-[29px] w-[65px]" text="3" dropClass="w-[23px] h-[23px] mr-[1px]" />
              <Ghost className="ml-[12px] h-[30px] w-[35px]">
                <svg width="14" height="14" viewBox="0 0 14 14"><path d="M1 1l12 12" stroke="#222" /></svg>
              </Ghost>
            </div>
            <div className="mt-[5px] h-[618px] w-[773px] rounded-[3px] border border-[#b8b8b8] p-[2px]">
              <div className="flex h-[588px]">
                <svg width="743" height="588" viewBox="0 0 743 588" className="block shrink-0 bg-[#b0b0b0]">
                  <polygon points="166,7 668,106 569,608 67,508" fill="#fff" />
                  <ellipse cx="328" cy="277.500" rx="140" ry="145.500" fill="#050505" />
                  <circle cx="633" cy="124" r="2.500" fill="#00e000" />
                </svg>
                <div className="ml-[1px] flex w-[23px] flex-col bg-[#e8e8e8]">
                  <Gbtn className="h-[23px] w-[23px]"><UpTri /></Gbtn>
                  <Gbtn className="mt-[132px] h-[264px] w-[23px]" />
                  <Gbtn className="mt-auto h-[23px] w-[23px]"><DownTri /></Gbtn>
                </div>
              </div>
              <div className="mt-[1px] flex h-[23px] w-[743px] bg-[#e8e8e8]">
                <Gbtn className="h-[23px] w-[23px]"><LeftTri /></Gbtn>
                <Gbtn className="ml-[158px] h-[23px] w-[382px]" />
                <Gbtn className="ml-auto h-[23px] w-[23px]"><RightTri /></Gbtn>
              </div>
            </div>
            <div className="mt-[3px] flex h-[31px] w-[773px] justify-between">
              <div className="flex h-[31px] w-[272px] items-center rounded-[2px] border border-[#8888ff] bg-[#d8d8fa] pl-[10px] pr-[5px]">
                <svg width="15" height="16" viewBox="0 0 15 16" className="shrink-0"><rect width="15" height="16" fill="#12303a" /><circle cx="7.500" cy="7" r="5" fill="#d6d86a" /><circle cx="9.500" cy="5" r="2.500" fill="#f2f2e0" /><rect x="0" y="12" width="15" height="4" fill="#2a6a3a" /></svg>
                <span className="ml-[10px] text-[16px] leading-none">新建画布1</span>
                <span className="ml-auto text-[15px] leading-none">100%</span>
              </div>
              <div className="flex w-[23px] flex-col justify-between">
                <Disabled className="h-[13px] w-[23px]"><UpTri /></Disabled>
                <Disabled className="h-[13px] w-[23px]"><DownTri /></Disabled>
              </div>
            </div>
            <div className="mt-[5px] flex h-[29px] items-center">
              <span className="ml-[200px] w-[90px] text-[16px] leading-none tracking-[0.8px]">内存使用量</span>
              <div className="relative h-[29px] w-[186px] rounded-[3px] border-2 border-[#c4c4c4] bg-white p-[1px]">
                <div className="h-full w-[9px] bg-[#3ee0a0]" />
                <span className="absolute left-[3px] top-0 text-[17px] leading-[25px] tracking-[0.3px]">5% (5%)</span>
              </div>
              <span className="ml-[13px] w-[73px] text-[16px] leading-none tracking-[0.5px]">磁盘容量</span>
              <div className="relative h-[29px] w-[186px] rounded-[3px] border-2 border-[#c4c4c4] bg-white p-[1px]">
                <div className="h-full w-[109px] bg-[#40bfff]" />
                <span className="absolute left-[3px] top-0 text-[17px] leading-[25px]">61%</span>
              </div>
            </div>
          </div>
        </div>
        <svg width="10" height="10" viewBox="0 0 10 10" className="absolute bottom-[1px] right-[3px]" fill="#aaa">
          <rect x="8" y="0" width="2" height="2" /><rect x="4" y="4" width="2" height="2" /><rect x="8" y="4" width="2" height="2" /><rect x="0" y="8" width="2" height="2" /><rect x="4" y="8" width="2" height="2" /><rect x="8" y="8" width="2" height="2" />
        </svg>
      </div>

      {/* annotation */}
      <svg width="1375" height="843" viewBox="0 0 1375 843" className="pointer-events-none absolute left-0 top-0">
        <rect x="1124.500" y="60.500" width="46" height="58" fill="none" stroke="#ff3b3b" strokeWidth="7" />
        <polygon points="917,255 1094,131 1088,127 1106,124 1095,139 1097,135 918,256" fill="#ff3b3b" stroke="#ff3b3b" strokeWidth="1" />
      </svg>
    </div>
  );
}
